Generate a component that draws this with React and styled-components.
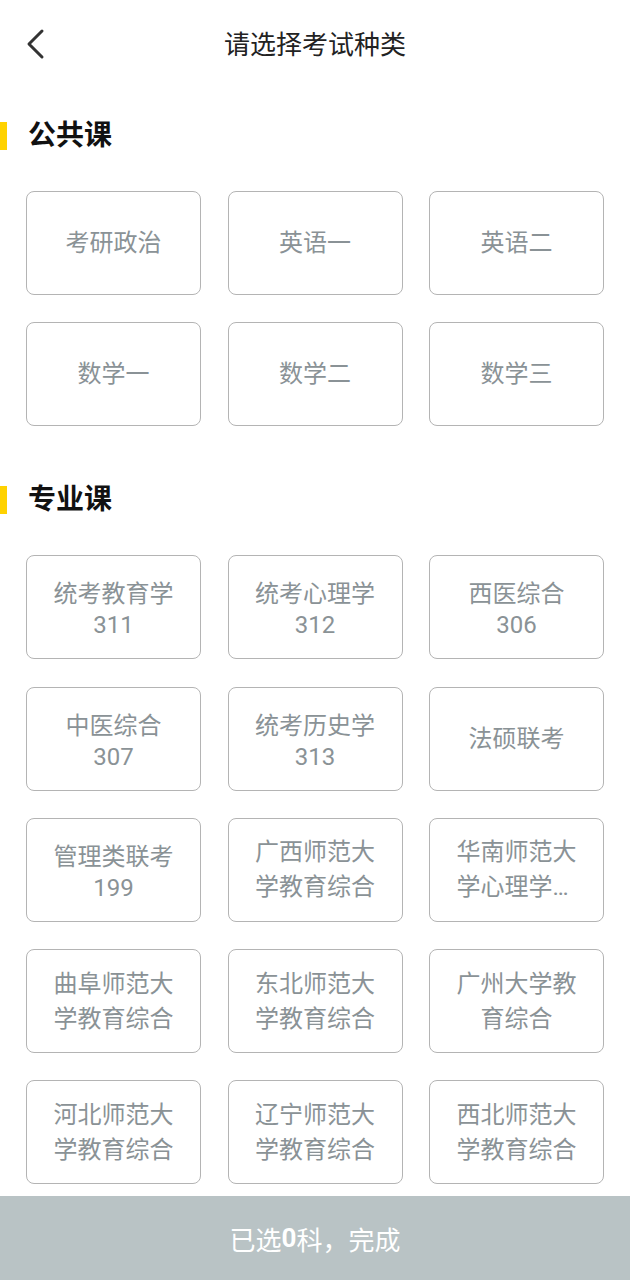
import React from 'react'
import styled, { createGlobalStyle } from 'styled-components'

const GlobalStyle = createGlobalStyle`
  html, body {
    margin: 0;
    padding: 0;
    background: #fff;
  }
  body {
    font-family: Roboto, "Noto Sans CJK SC", sans-serif;
  }
  * { box-sizing: border-box; }
`

const Page = styled.div`
  width: 630px;
  min-height: 1280px;
  background: #fff;
  padding-bottom: 100px;
`

const Header = styled.div`
  position: relative;
  height: 90px;
  display: flex;
  align-items: center;
  justify-content: center;
`

const BackButton = styled.button`
  position: absolute;
  left: 20px;
  top: 24px;
  width: 32px;
  height: 40px;
  border: none;
  background: transparent;
  padding: 0;
  display: flex;
  align-items: center;
  justify-content: center;
  cursor: pointer;
`

const Title = styled.h1`
  margin: 0;
  font-size: 26px;
  font-weight: 400;
  color: #222;
  line-height: 1;
`

const Section = styled.section`
  padding-top: ${({ first }) => (first ? '32px' : '60px')};
`

const SectionTitle = styled.h2`
  margin: 0 0 41px;
  height: 28px;
  display: flex;
  align-items: center;
  gap: 21px;
  font-size: 28px;
  font-weight: 700;
  color: #111;
  line-height: 1;

  &::before {
    content: '';
    width: 7px;
    height: 28px;
    background: #ffd200;
  }
`

const Grid = styled.div`
  display: grid;
  grid-template-columns: repeat(3, 175px);
  column-gap: 26.5px;
  row-gap: 27.25px;
  padding: 0 25px 0 26px;
`

const Card = styled.button`
  height: 104px;
  border: 1px solid #b4b4b4;
  border-radius: 8px;
  background: #fff;
  padding: 1px 24px 0;
  display: flex;
  flex-direction: column;
  align-items: center;
  justify-content: center;
  text-align: center;
  font-family: Roboto, "Noto Sans CJK SC", sans-serif;
  font-size: 24px;
  color: #8a9296;
  cursor: pointer;
`

const Name = styled.div`
  width: 100%;
  line-height: 35px;
  display: -webkit-box;
  -webkit-line-clamp: 2;
  -webkit-box-orient: vertical;
  overflow: hidden;
`

const Code = styled.div`
  line-height: 26px;
`

const BottomBar = styled.button`
  position: fixed;
  left: 0;
  bottom: 0;
  width: 630px;
  height: 84px;
  border: none;
  background: #b9c3c5;
  color: #fff;
  font-family: Roboto, "Noto Sans CJK SC", sans-serif;
  font-size: 26px;
  display: flex;
  align-items: center;
  justify-content: center;
  padding: 0;
  cursor: pointer;

  b {
    font-weight: 700;
  }
`

const publicCourses = [
  { name: '考研政治' },
  { name: '英语一' },
  { name: '英语二' },
  { name: '数学一' },
  { name: '数学二' },
  { name: '数学三' },
]

const majorCourses = [
  { name: '统考教育学', code: '311' },
  { name: '统考心理学', code: '312' },
  { name: '西医综合', code: '306' },
  { name: '中医综合', code: '307' },
  { name: '统考历史学', code: '313' },
  { name: '法硕联考' },
  { name: '管理类联考', code: '199' },
  { name: '广西师范大学教育综合' },
  { name: '华南师范大学心理学专业综合' },
  { name: '曲阜师范大学教育综合' },
  { name: '东北师范大学教育综合' },
  { name: '广州大学教育综合' },
  { name: '河北师范大学教育综合' },
  { name: '辽宁师范大学教育综合' },
  { name: '西北师范大学教育综合' },
]

const CourseGrid = ({ items }) => (
  <Grid>
    {items.map((c) => (
      <Card key={c.name}>
        <Name>{c.name}</Name>
        {c.code && <Code>{c.code}</Code>}
      </Card>
    ))}
  </Grid>
)

export default function App() {
  return (
    <>
      <GlobalStyle />
      <Page>
        <Header>
          <BackButton aria-label="返回">
            <svg width="20" height="32" viewBox="0 0 20 32">
              <polyline
                points="16,3 3,16 16,29"
                fill="none"
                stroke="#333"
                strokeWidth="3"
                strokeLinecap="round"
                strokeLinejoin="round"
              />
            </svg>
          </BackButton>
          <Title>请选择考试种类</Title>
        </Header>

        <Section first>
          <SectionTitle>公共课</SectionTitle>
          <CourseGrid items={publicCourses} />
        </Section>

        <Section>
          <SectionTitle>专业课</SectionTitle>
          <CourseGrid items={majorCourses} />
        </Section>
      </Page>
      <BottomBar>
        已选<b>0</b>科，完成
      </BottomBar>
    </>
  )
}
